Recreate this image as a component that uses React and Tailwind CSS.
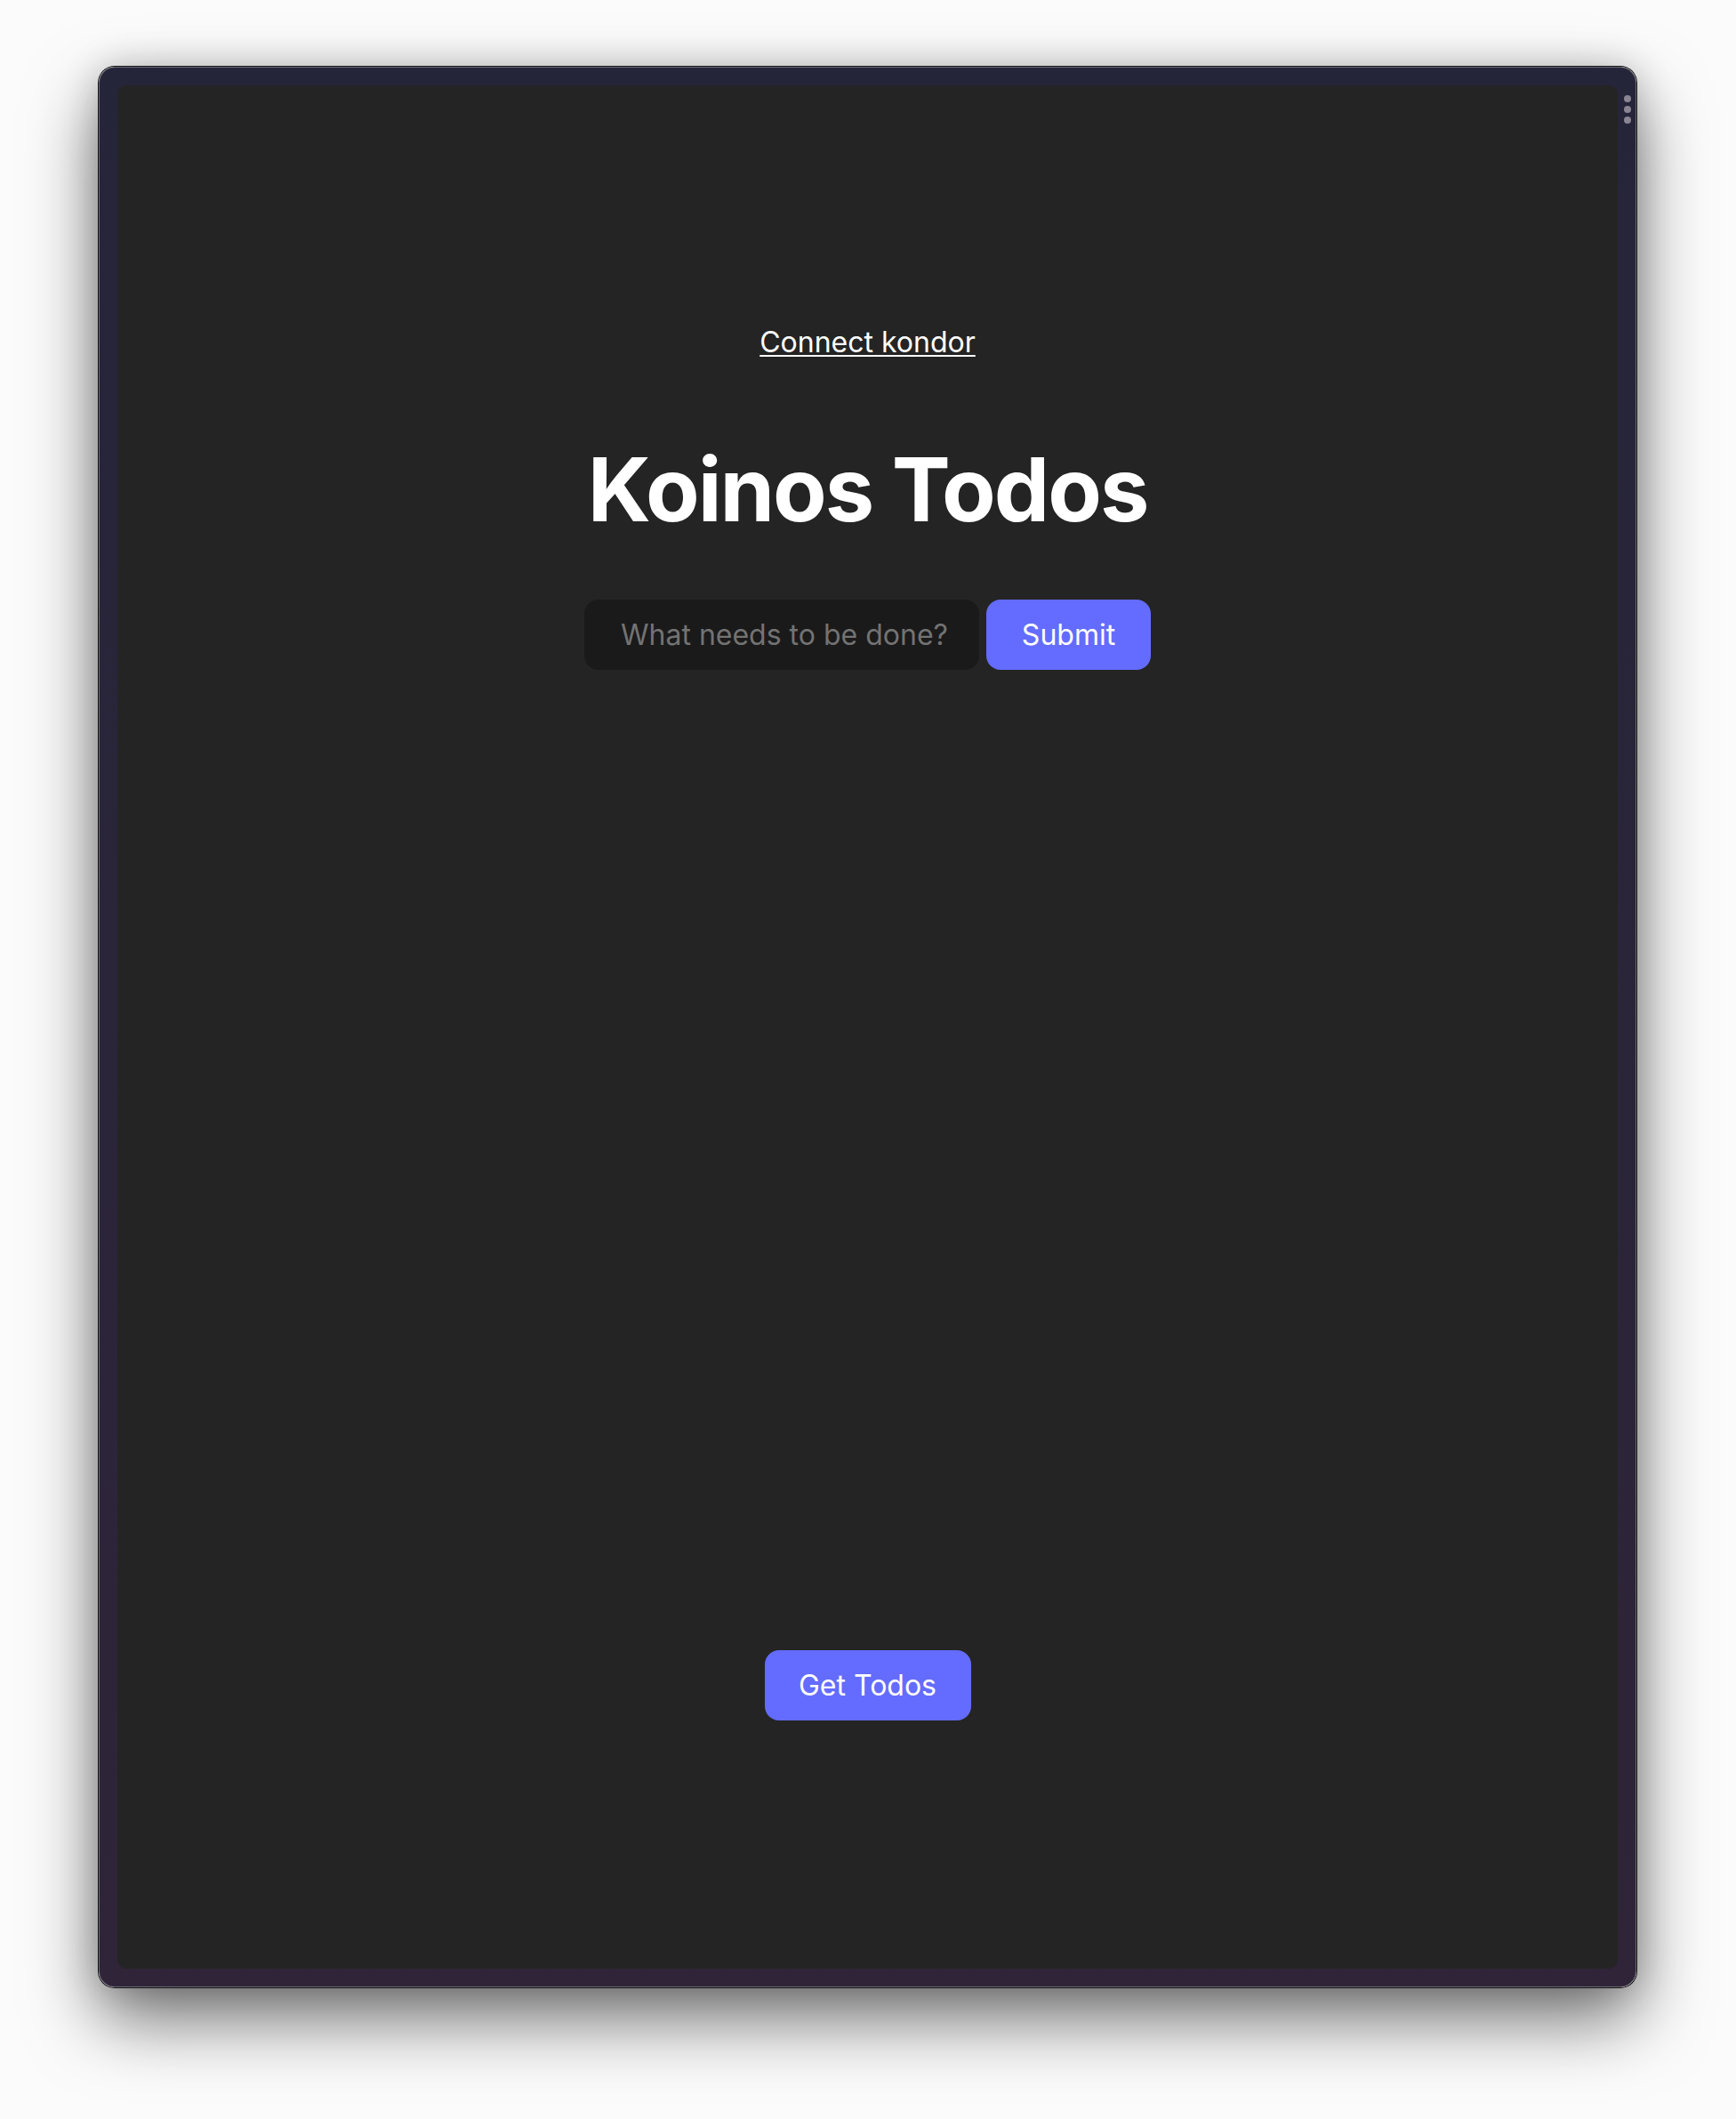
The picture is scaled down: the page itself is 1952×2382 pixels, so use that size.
import React, { useState } from 'react';

const font = { fontFamily: 'Inter, "Noto Sans", sans-serif' };

const App = () => {
  const [todo, setTodo] = useState('');

  return (
    <div className="min-h-[2382px] w-full bg-[#fbfbfb] pt-[75px] pl-[111px] pr-[112px] pb-[148px]" style={font}>
      <div className="relative h-[2159px] rounded-[18px] border border-[#6c6a74] bg-gradient-to-b from-[#25253a] to-[#2f2438] p-[20px] shadow-[0_0_0_1px_#111,0_36px_80px_rgba(0,0,0,0.55),0_0_40px_rgba(0,0,0,0.18)]">
        {/* window menu dots */}
        <div className="absolute right-[5px] top-[31px] flex flex-col gap-[4px]">
          <span className="block h-[8px] w-[8px] rounded-full bg-[#8a8593]" />
          <span className="block h-[8px] w-[8px] rounded-full bg-[#8a8593]" />
          <span className="block h-[8px] w-[8px] rounded-full bg-[#8a8593]" />
        </div>

        <div className="flex h-full flex-col items-center rounded-[10px] bg-[#242424] pt-[269px]">
          <a href="#" className="text-[32px] leading-[40px] text-white underline decoration-[2px] underline-offset-[3px]">
            Connect kondor
          </a>

          <h1 className="mt-[96px] text-[99px] font-bold leading-[98px] tracking-[-2px] text-white">
            Koinos Todos
          </h1>

          <form className="mt-[75px] flex gap-[8px]" onSubmit={(e) => e.preventDefault()}>
            <input
              value={todo}
              onChange={(e) => setTodo(e.target.value)}
              placeholder="What needs to be done?"
              className="h-[79px] w-[444px] rounded-[16px] border border-transparent bg-[#1a1a1a] pl-[40px] pr-[6px] text-[32px] text-white outline-none placeholder:text-[#737373]"
            />
            <button type="submit" className="h-[79px] w-[185px] rounded-[16px] border border-transparent bg-[#646cff] text-[32px] font-normal text-white">
              Submit
            </button>
          </form>

          <button className="mt-[1102px] h-[79px] w-[232px] rounded-[16px] border border-transparent bg-[#646cff] text-[32px] font-normal text-white">
            Get Todos
          </button>
        </div>
      </div>
    </div>
  );
};

export default App;
